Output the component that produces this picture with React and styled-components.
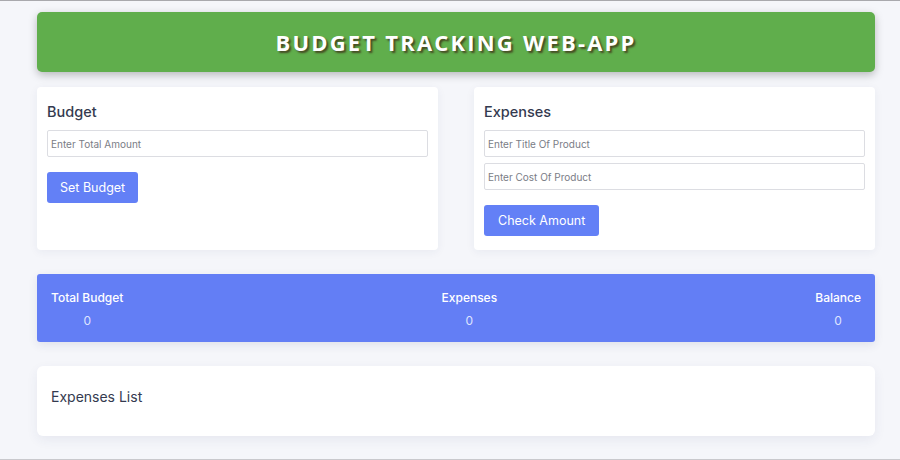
import React from "react";
import styled, { createGlobalStyle } from "styled-components";

const Global = createGlobalStyle`
  html, body { margin: 0; padding: 0; }
  body { background: #f5f6fa; font-family: Inter, "Noto Sans", sans-serif; }
  * { box-sizing: border-box; }
`;

const Page = styled.div`
  height: 460px;
  border-top: 1px solid #a9a9ad;
  border-bottom: 1px solid #c9c9cd;
  background: #f5f6fa;
  padding: 11px 25px 0 37px;
  display: flex;
  flex-direction: column;
`;

const Header = styled.header`
  height: 60px;
  background: #60ae4c;
  border-radius: 5px;
  box-shadow: 0 3px 8px rgba(0, 0, 0, 0.25);
  display: flex;
  align-items: center;
  justify-content: center;
`;

const Title = styled.h1`
  margin: 0;
  color: #ffffff;
  font-family: "Open Sans", sans-serif;
  font-weight: 700;
  font-size: 22px;
  letter-spacing: 2.2px;
  text-shadow: 2px 2px 2px rgba(60, 40, 20, 0.75);
`;

const Row = styled.div`
  margin-top: 15px;
  display: grid;
  grid-template-columns: 1fr 1fr;
  gap: 36px;
`;

const Card = styled.section`
  background: #ffffff;
  border-radius: 4px;
  box-shadow: 0 2px 10px rgba(40, 50, 110, 0.06);
  padding: 16px 10px 14px;
  height: 163px;
  display: flex;
  flex-direction: column;
`;

const CardTitle = styled.h2`
  margin: 0 0 9px;
  font-size: 14.5px;
  font-weight: 500;
  color: #343a4f;
  line-height: 18px;
`;

const Input = styled.input`
  height: 27px;
  width: 100%;
  border: 1px solid #dcdde2;
  border-radius: 2px;
  padding: 0 3px;
  font-family: inherit;
  font-size: 10px;
  margin-bottom: 6px;
  outline: none;
  &::placeholder { color: #7a7d86; }
`;

const Button = styled.button`
  align-self: flex-start;
  margin-top: 9px;
  height: 31px;
  padding: 0 ${(p) => p.$pad}px;
  background: #6380f6;
  color: #fff;
  border: none;
  border-radius: 3px;
  font-family: inherit;
  font-size: 12.5px;
  cursor: pointer;
`;

const Summary = styled.div`
  margin-top: 24px;
  height: 68px;
  background: #637ef5;
  border-radius: 3px;
  box-shadow: 0 3px 10px rgba(40, 50, 110, 0.1);
  padding: 16px 14px 0;
  display: flex;
  justify-content: space-between;
`;

const Stat = styled.div`
  display: flex;
  flex-direction: column;
  align-items: center;
  color: #fff;
`;

const StatLabel = styled.div`
  font-size: 12px;
  font-weight: 500;
  line-height: 16px;
`;

const StatValue = styled.div`
  margin-top: 7px;
  font-size: 12px;
  line-height: 16px;
  color: #dfe4ff;
`;

const ListCard = styled.section`
  margin-top: 24px;
  height: 70px;
  background: #fff;
  border-radius: 6px;
  box-shadow: 0 4px 12px rgba(40, 50, 110, 0.07);
  padding: 22px 14px 0;
`;

const ListTitle = styled.h3`
  margin: 0;
  font-size: 14px;
  font-weight: 400;
  color: #343a4f;
  line-height: 18px;
`;

export default function App() {
  return (
    <>
      <Global />
      <Page>
        <Header>
          <Title>BUDGET TRACKING WEB-APP</Title>
        </Header>
        <Row>
          <Card>
            <CardTitle>Budget</CardTitle>
            <Input placeholder="Enter Total Amount" />
            <Button $pad={13}>Set Budget</Button>
          </Card>
          <Card>
            <CardTitle>Expenses</CardTitle>
            <Input placeholder="Enter Title Of Product" />
            <Input placeholder="Enter Cost Of Product" />
            <Button $pad={14}>Check Amount</Button>
          </Card>
        </Row>
        <Summary>
          <Stat>
            <StatLabel>Total Budget</StatLabel>
            <StatValue>0</StatValue>
          </Stat>
          <Stat>
            <StatLabel>Expenses</StatLabel>
            <StatValue>0</StatValue>
          </Stat>
          <Stat>
            <StatLabel>Balance</StatLabel>
            <StatValue>0</StatValue>
          </Stat>
        </Summary>
        <ListCard>
          <ListTitle>Expenses List</ListTitle>
        </ListCard>
      </Page>
    </>
  );
}
